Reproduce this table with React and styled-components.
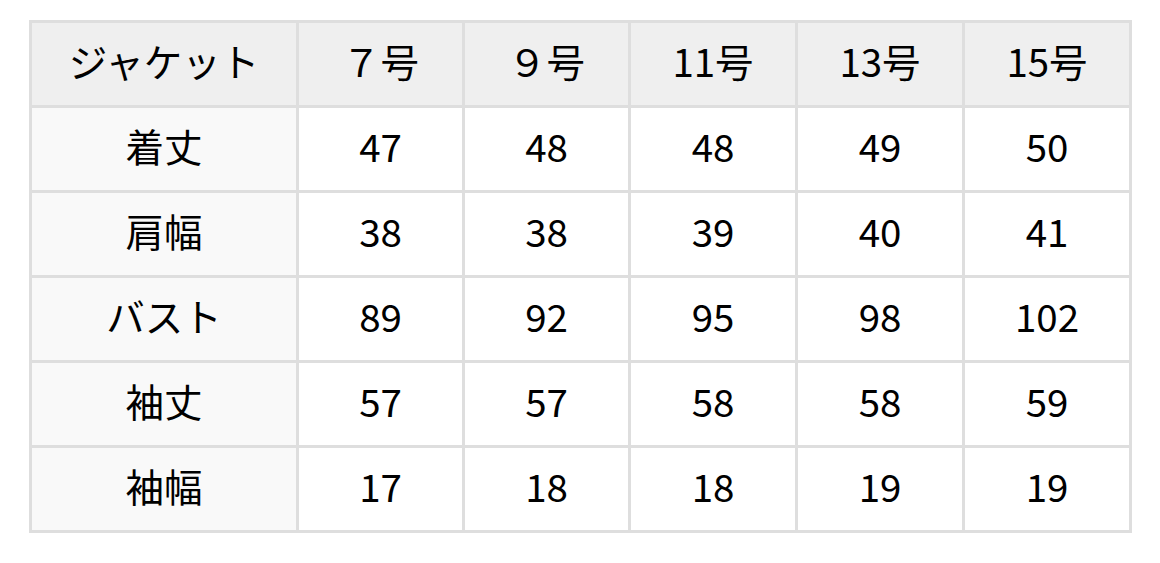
import React from "react";
import styled, { createGlobalStyle } from "styled-components";

const Global = createGlobalStyle`
  body {
    margin: 0;
    background: #fff;
    font-family: "Noto Sans CJK JP", "Noto Sans", sans-serif;
  }
`;

const Wrap = styled.div`
  padding: 20px 29px;
`;

const Table = styled.table`
  border-collapse: collapse;
  table-layout: fixed;
  width: 1103px;
  border: 3px solid #dedede;
  color: #000;
  font-size: 38.5px;
`;

const Row = styled.tr`
  height: 85px;
`;

const Cell = styled.td`
  border: 3px solid #dedede;
  text-align: center;
  vertical-align: middle;
  padding: 0 0 8px;
  line-height: 1;
  font-weight: 400;
  background: ${(p) => (p.$head ? "#efefef" : p.$side ? "#f9f9f9" : "#fff")};
`;

const sizes = ["７号", "９号", "11号", "13号", "15号"];
const widths = [267, 166, 166, 167, 167, 167];

const rows = [
  ["着丈", 47, 48, 48, 49, 50],
  ["肩幅", 38, 38, 39, 40, 41],
  ["バスト", 89, 92, 95, 98, 102],
  ["袖丈", 57, 57, 58, 58, 59],
  ["袖幅", 17, 18, 18, 19, 19],
];

const App = () => {
  return (
    <Wrap>
      <Global />
      <Table>
        <colgroup>
          {widths.map((w, i) => (
            <col key={i} style={{ width: w }} />
          ))}
        </colgroup>
        <thead>
          <Row>
            <Cell as="th" $head>
              ジャケット
            </Cell>
            {sizes.map((s) => (
              <Cell as="th" $head key={s}>
                {s}
              </Cell>
            ))}
          </Row>
        </thead>
        <tbody>
          {rows.map((r) => (
            <Row key={r[0]}>
              <Cell $side>{r[0]}</Cell>
              {r.slice(1).map((v, i) => (
                <Cell key={i}>{v}</Cell>
              ))}
            </Row>
          ))}
        </tbody>
      </Table>
    </Wrap>
  );
};

export default App;
